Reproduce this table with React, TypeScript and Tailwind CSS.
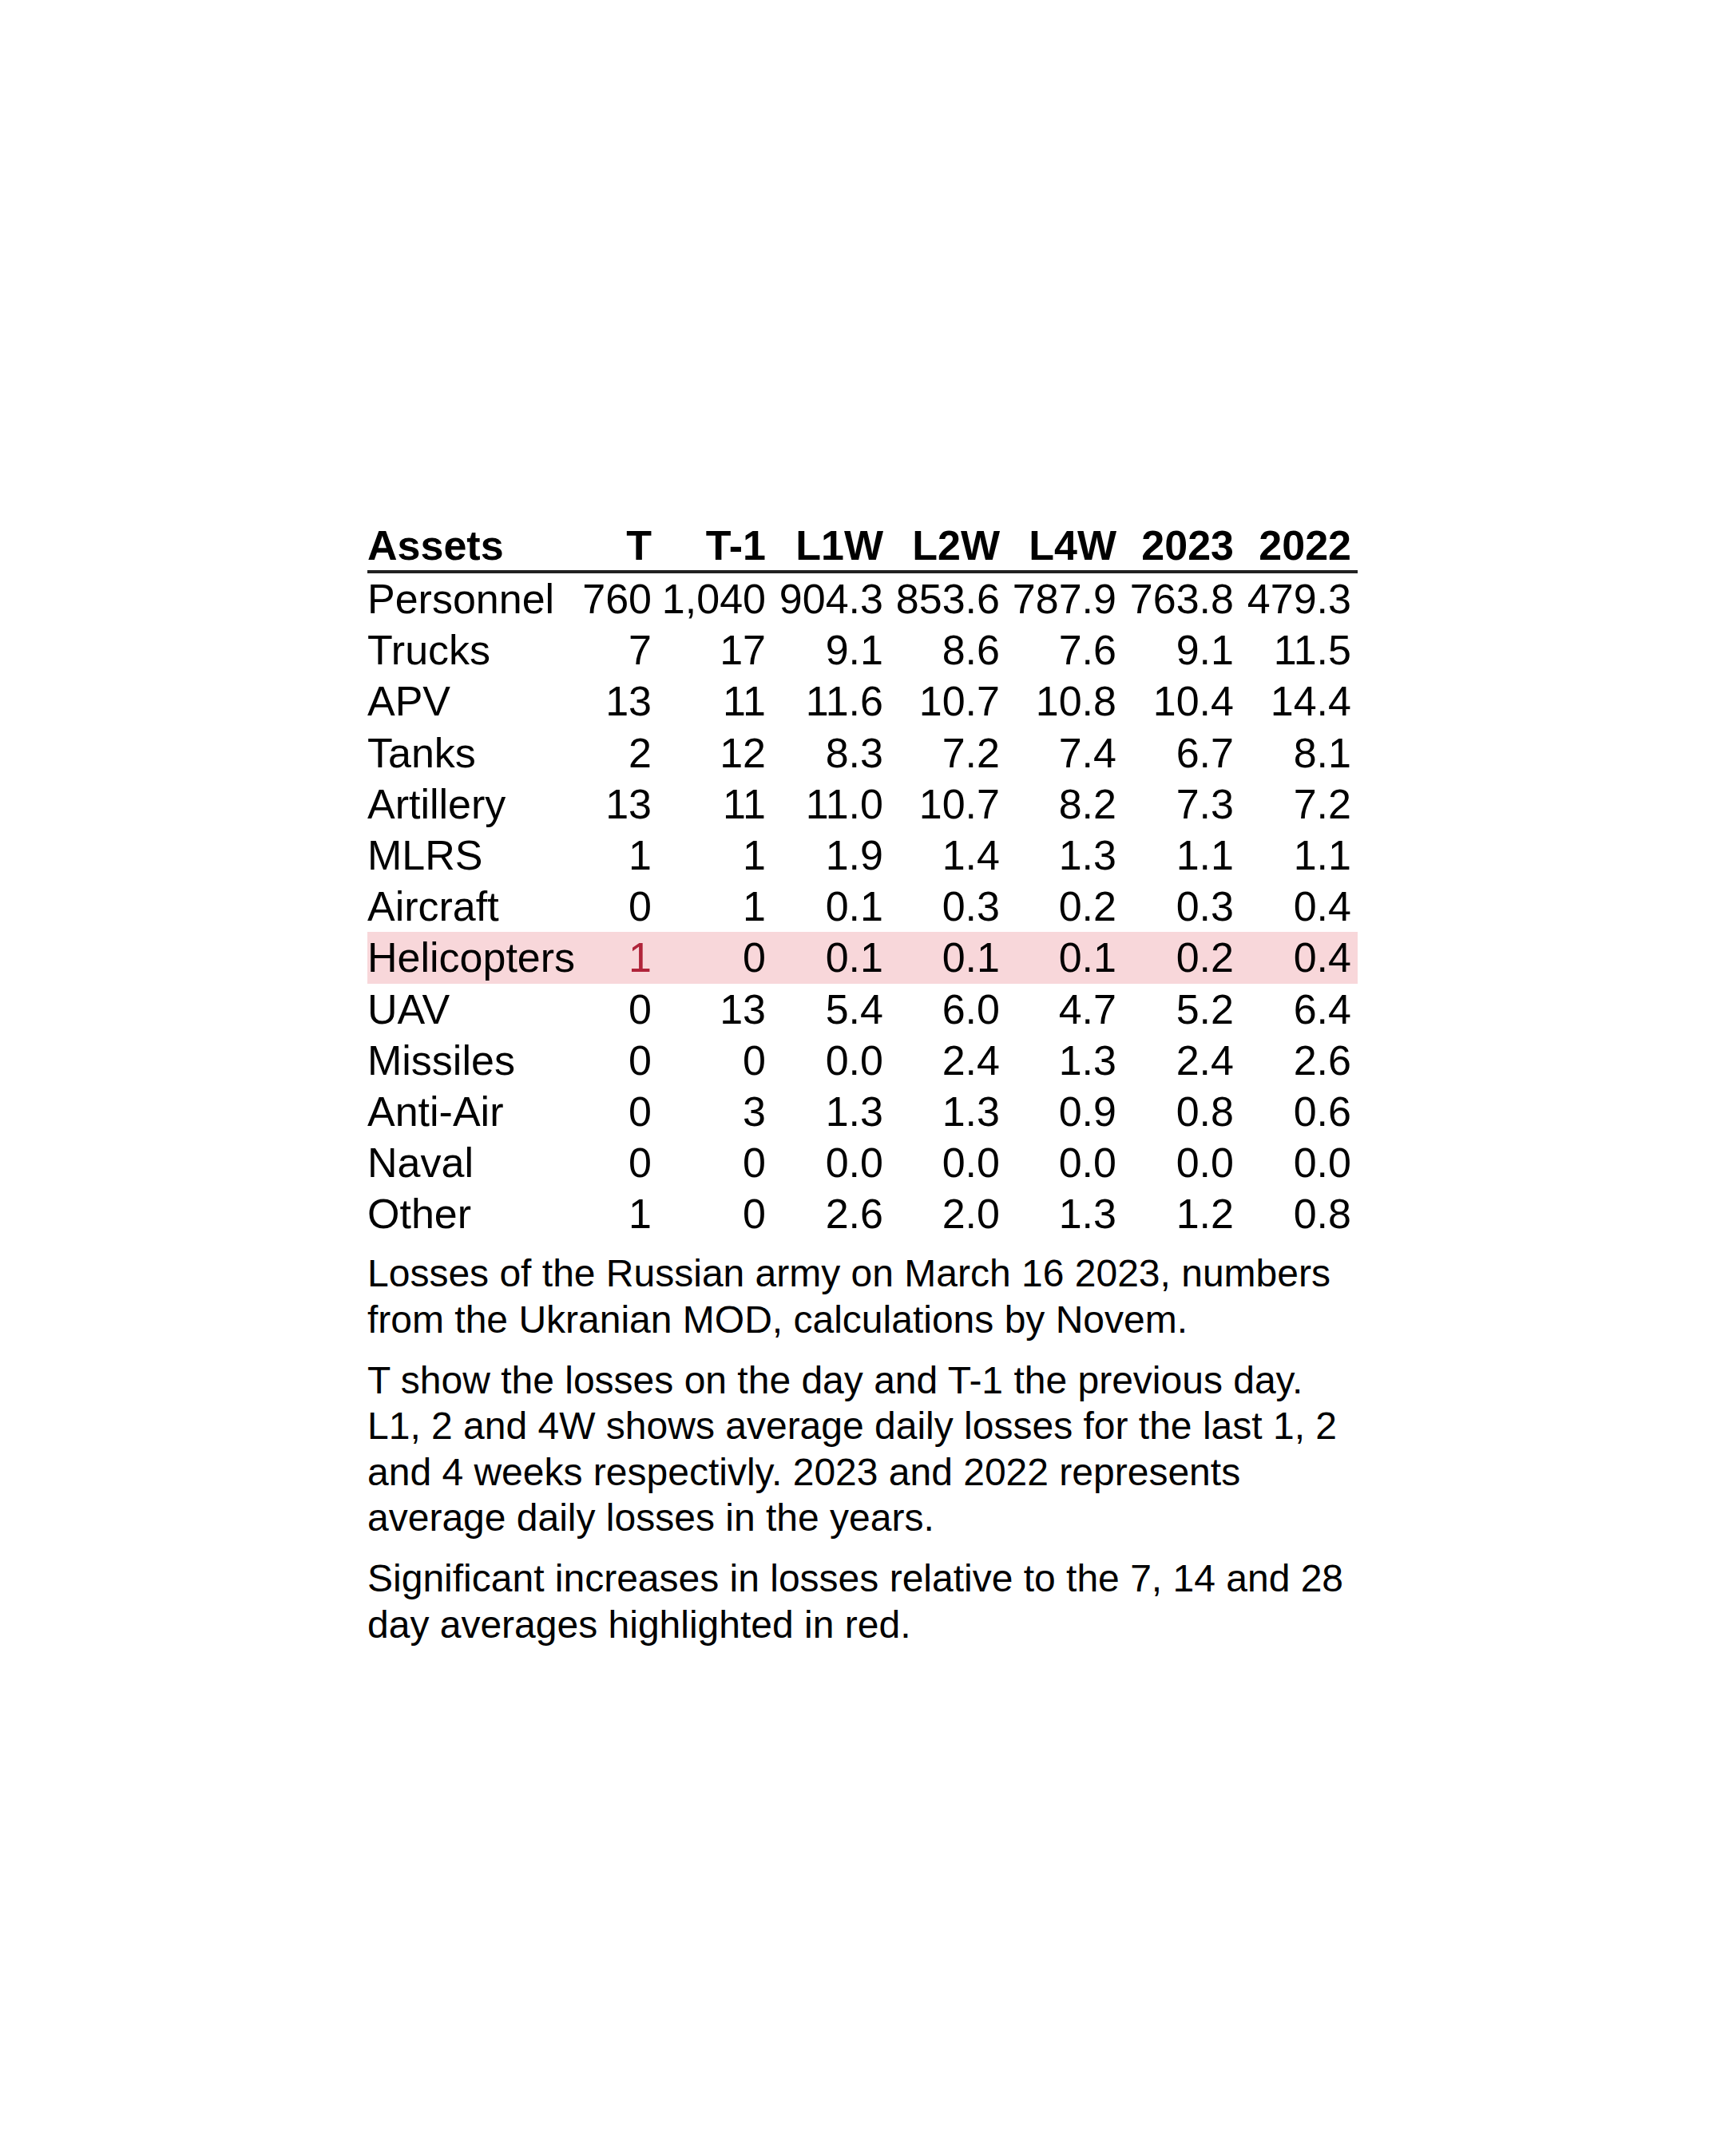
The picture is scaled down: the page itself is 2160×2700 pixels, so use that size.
import React from "react";

type Row = { name: string; vals: string[]; hl?: boolean };

const rows: Row[] = [
  { name: "Personnel", vals: ["760", "1,040", "904.3", "853.6", "787.9", "763.8", "479.3"] },
  { name: "Trucks", vals: ["7", "17", "9.1", "8.6", "7.6", "9.1", "11.5"] },
  { name: "APV", vals: ["13", "11", "11.6", "10.7", "10.8", "10.4", "14.4"] },
  { name: "Tanks", vals: ["2", "12", "8.3", "7.2", "7.4", "6.7", "8.1"] },
  { name: "Artillery", vals: ["13", "11", "11.0", "10.7", "8.2", "7.3", "7.2"] },
  { name: "MLRS", vals: ["1", "1", "1.9", "1.4", "1.3", "1.1", "1.1"] },
  { name: "Aircraft", vals: ["0", "1", "0.1", "0.3", "0.2", "0.3", "0.4"] },
  { name: "Helicopters", vals: ["1", "0", "0.1", "0.1", "0.1", "0.2", "0.4"], hl: true },
  { name: "UAV", vals: ["0", "13", "5.4", "6.0", "4.7", "5.2", "6.4"] },
  { name: "Missiles", vals: ["0", "0", "0.0", "2.4", "1.3", "2.4", "2.6"] },
  { name: "Anti-Air", vals: ["0", "3", "1.3", "1.3", "0.9", "0.8", "0.6"] },
  { name: "Naval", vals: ["0", "0", "0.0", "0.0", "0.0", "0.0", "0.0"] },
  { name: "Other", vals: ["1", "0", "2.6", "2.0", "1.3", "1.2", "0.8"] },
];

const headers = ["T", "T-1", "L1W", "L2W", "L4W", "2023", "2022"];

const gridCols =
  "grid grid-cols-[262px_102px_143px_147px_146px_146px_147px_147px]";

export default function App() {
  return (
    <div
      className="w-[2160px] h-[2700px] bg-white flex flex-col items-center pt-[652px] text-black"
      style={{ fontFamily: '"Liberation Sans", Arial, sans-serif' }}
    >
      <div className="w-[1240px]">
        <div
          className={`${gridCols} h-[66px] leading-[62px] text-[52px] font-bold border-b-[4px] border-[#222222]`}
        >
          <div className="text-left">Assets</div>
          {headers.map((h) => (
            <div key={h} className="text-right pr-[8px]">
              {h}
            </div>
          ))}
        </div>
        {rows.map((r) => (
          <div
            key={r.name}
            className={`${gridCols} h-[64.2px] leading-[64.2px] text-[52px] ${
              r.hl ? "bg-[#f8d7da]" : ""
            }`}
          >
            <div className="text-left whitespace-nowrap">{r.name}</div>
            {r.vals.map((v, i) => (
              <div
                key={i}
                className={`text-right pr-[8px] whitespace-nowrap ${
                  r.hl && i === 0 ? "text-[#b0243a]" : ""
                }`}
              >
                {v}
              </div>
            ))}
          </div>
        ))}
        <div className="text-[48px] leading-[57.6px] mt-[14px]">
          <p>Losses of the Russian army on March 16 2023, numbers from the Ukranian MOD, calculations by Novem.</p>
          <p className="mt-[18px]">
            T show the losses on the day and T-1 the previous day. L1, 2 and 4W shows average daily losses for the last 1, 2 and 4 weeks respectivly. 2023 and 2022 represents average daily losses in the years.
          </p>
          <p className="mt-[18px]">
            Significant increases in losses relative to the 7, 14 and 28 day averages highlighted in red.
          </p>
        </div>
      </div>
    </div>
  );
}
